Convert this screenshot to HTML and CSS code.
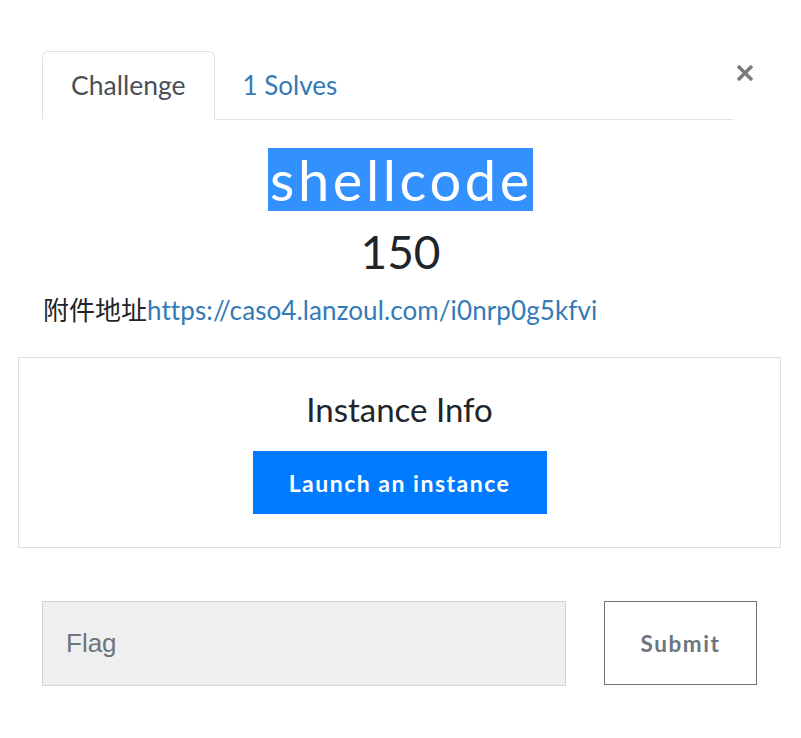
FILE: index.html
```html
<!DOCTYPE html>
<html lang="en">
<head>
<meta charset="utf-8">
<title>shellcode</title>
<link rel="stylesheet" href="styles.css">
</head>
<body>
<div class="modal">
  <div class="tabs-row">
    <ul class="tabs">
      <li class="tab active">Challenge</li>
      <li class="tab link">1 Solves</li>
    </ul>
    <button class="close" aria-label="Close">
      <svg width="20" height="20" viewBox="0 0 20 20"><path d="M3 3 L17 17 M17 3 L3 17" stroke="#7a7a7a" stroke-width="3.4" stroke-linecap="butt"/></svg>
    </button>
  </div>
  <h2 class="name"><span class="sel">shellcode</span></h2>
  <h3 class="value">150</h3>
  <p class="desc">附件地址<a href="#">https://caso4.lanzoul.com/i0nrp0g5kfvi</a></p>
  <div class="instance">
    <h4 class="inst-title">Instance Info</h4>
    <button class="launch">Launch an instance</button>
  </div>
  <div class="flag-row">
    <div class="flag-input">Flag</div>
    <button class="submit">Submit</button>
  </div>
</div>
</body>
</html>
```
FILE: styles.css
```css
html, body { margin: 0; padding: 0; background: #fff; }
body { font-family: "Lato", "Noto Sans", sans-serif; color: #212529; }
.modal { width: 801px; height: 738px; box-sizing: border-box; padding-top: 51px; }
.tabs-row { display: flex; align-items: flex-start; margin: 0 20px 0 42px; }
.tabs { display: flex; list-style: none; margin: 0; padding: 0; width: 691px; border-bottom: 1px solid #dee2e6; height: 68px; }
.tab { font-size: 26.5px; line-height: 34px; padding: 16px 28px 17px 28px; margin-bottom: -1px; border: 1px solid transparent; border-radius: 6px 6px 0 0; }
.tab.active { color: #495057; border-color: #dee2e6 #dee2e6 #fff; background: #fff; }
.tab.link { color: #337ab7; padding-left: 27px; font-size: 26px; }
.close { background: none; border: 0; padding: 0; margin: 12px 0 0 2px; width: 20px; height: 20px; display: block; }
.name { margin: 28px 0 0; text-align: center; font-weight: 300; font-size: 56px; line-height: 63px; height: 63px; }
.sel { background: #3390ff; color: #fff; font-family: "Lato", sans-serif; font-weight: 400; letter-spacing: 3.6px; padding: 0 0 0 2px; display: inline-block; }
.value { margin: 13px 0 0; text-align: center; font-weight: 400; font-size: 46px; line-height: 56px; }
.desc { margin: 12px 0 0 43px; font-size: 26px; line-height: 36px; font-family: "Lato", "Noto Sans CJK SC", sans-serif; }
.desc a { color: #337ab7; text-decoration: none; letter-spacing: 0.1px; }
.instance { margin: 29px 20px 0 18px; border: 1px solid #dddddd; height: 189px; display: flex; flex-direction: column; align-items: center; }
.inst-title { margin: 30px 0 0; font-weight: 400; font-size: 33px; line-height: 42px; }
.launch { margin-top: 21px; width: 294px; height: 63px; background: #007bff; color: #fff; border: 0; font-family: "Lato", sans-serif; font-weight: 700; font-size: 23px; letter-spacing: 1.5px; }
.flag-row { display: flex; margin: 53px 0 0 42px; gap: 38px; }
.flag-input { width: 524px; height: 85px; box-sizing: border-box; background: #efefef; border: 1px solid #ced4da; padding-left: 23px; display: flex; align-items: center; font-family: "Liberation Sans", Arial, sans-serif; font-size: 26px; color: #6c757d; }
.submit { width: 153px; height: 84px; background: #fff; border: 1px solid #6c757d; color: #6c757d; font-family: "Lato", sans-serif; font-weight: 700; font-size: 22.5px; letter-spacing: 1.6px; }
```
